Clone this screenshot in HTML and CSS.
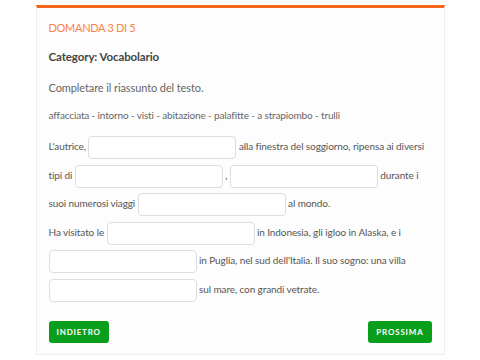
FILE: index.html
```html
<!DOCTYPE html>
<html lang="it">
<head>
    <meta charset="UTF-8">
    <meta name="viewport" content="width=device-width, initial-scale=1.0">
    <title>Quiz - Domanda 3</title>
    <link rel="stylesheet" href="styles.css">
</head>
<body>
    <div class="card">
        <div class="counter">DOMANDA 3 DI 5</div>
        <div class="category">Category: Vocabolario</div>
        <div class="prompt">Completare il riassunto del testo.</div>
        <div class="words">affacciata - intorno - visti - abitazione - palafitte - a strapiombo - trulli</div>
        <div class="passage">
            L'autrice, <input type="text" class="blank"> alla finestra del soggiorno, ripensa ai diversi<br>
            tipi di <input type="text" class="blank"> , <input type="text" class="blank"> durante i<br>
            suoi numerosi viaggi <input type="text" class="blank"> al mondo.<br>
            Ha visitato le <input type="text" class="blank"> in Indonesia, gli igloo in Alaska, e i<br>
            <input type="text" class="blank"> in Puglia, nel sud dell'Italia. Il suo sogno: una villa<br>
            <input type="text" class="blank"> sul mare, con grandi vetrate.
        </div>
        <div class="nav">
            <button class="button">INDIETRO</button>
            <button class="button">PROSSIMA</button>
        </div>
    </div>
</body>
</html>
```

FILE: styles.css
```css
body {
    margin: 0;
    padding: 5px 0 0;
    background: #fff;
    font-family: Lato, sans-serif;
    color: #555;
}
.card {
    width: 383px;
    margin: 0 auto;
    padding: 12px 12px 11px;
    background: #fdfdfd;
    border: 1px solid #eeeeee;
    border-top: 3px solid #f4661b;
}
.counter {
    color: #f7844a;
    font-size: 11px;
    letter-spacing: -0.3px;
    line-height: 16px;
}
.category {
    margin-top: 13px;
    font-size: 11.5px;
    letter-spacing: -0.1px;
    font-weight: bold;
    color: #444;
    line-height: 16px;
}
.prompt {
    margin-top: 15px;
    font-size: 11px;
    letter-spacing: -0.1px;
    color: #666;
    line-height: 16px;
}
.words {
    margin-top: 12px;
    font-size: 10px;
    letter-spacing: -0.15px;
    color: #666;
    line-height: 14px;
}
.passage {
    margin-top: 10px;
    font-size: 10px;
    letter-spacing: -0.1px;
    color: #555;
    line-height: 28.6px;
    white-space: nowrap;
}
.blank {
    width: 148px;
    height: 23px;
    box-sizing: border-box;
    border: 1px solid #dcdde3;
    border-radius: 4px;
    background: #fff;
    vertical-align: middle;
    margin: 0;
    padding: 0 6px;
}
.nav {
    display: flex;
    justify-content: space-between;
    margin-top: 17px;
}
.button {
    height: 22px;
    padding: 0 8px;
    background: #0a9e1d;
    color: #fff;
    border: none;
    border-radius: 3px;
    font-family: Lato, sans-serif;
    font-size: 8px;
    font-weight: bold;
    letter-spacing: 0.8px;
}
```
